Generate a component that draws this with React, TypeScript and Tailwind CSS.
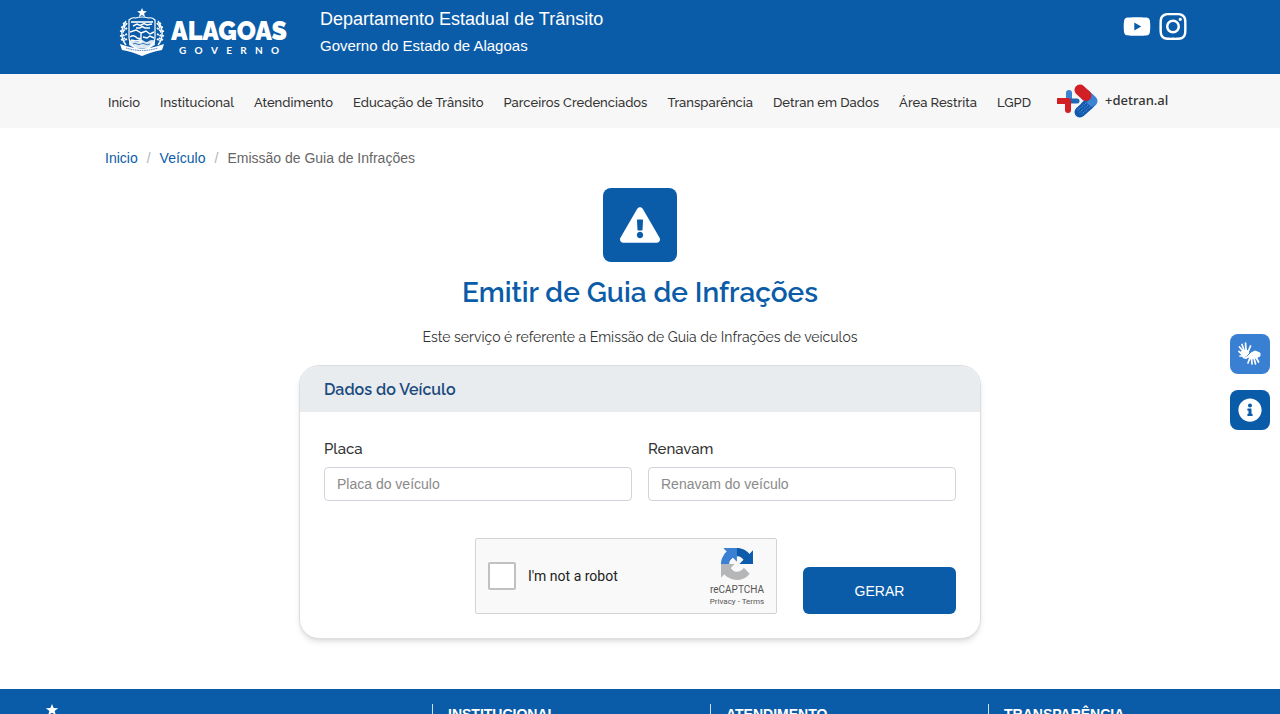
import {
  FaExclamationTriangle,
  FaInfoCircle,
  FaInstagram,
  FaYoutube,
} from "react-icons/fa";

const menu = [
  "Início",
  "Institucional",
  "Atendimento",
  "Educação de Trânsito",
  "Parceiros Credenciados",
  "Transparência",
  "Detran em Dados",
  "Área Restrita",
  "LGPD",
];

const footerColumns = [
  { title: "INSTITUCIONAL" },
  { title: "ATENDIMENTO" },
  { title: "TRANSPARÊNCIA" },
];

const Crest = ({ className }: { className: string }) => (
  <svg viewBox="0 0 46 48" className={className} fill="none" stroke="white" aria-hidden="true">
    <path d="M23 0l1.300 3.100 3.600.2-2.800 2.200 1 3.400-3.100-1.900-3.100 1.900 1-3.400-2.800-2.200 3.600-.2z" fill="white" stroke="none" />
    <path d="M10 12q3-3 6.500-2 6.500-2 13 0 3.500-1 6.500 2v18q0 8-13 13-13-5-13-13z" strokeWidth="1.200" />
    <path d="M12 14h22" strokeWidth="1.600" />
    <path d="M14 18l4-2 3 1.500 4-2 3 1.500 5-1M17 20h4l2-1.500 3 1.500h5" strokeWidth="1.500" />
    <path d="M11 24l6-2 5 3V38M22 25l5-2 4 3 4-2M11 29q4-3 7 1l4 1M24 29l4 1 3-2 4 2M12 32l5 1 4-1" strokeWidth="1.400" />
    <path d="M10 33q3-2 5 0t5 0 5 0 5 0 6 0v4l-5 3H15l-5-3z" fill="white" stroke="none" opacity=".85" />
    <path d="M14 36q2-1.500 4 0t4 0 4 0 5 0" stroke="#0b5ca8" strokeWidth=".8" />
    <path d="M7 37C1 30 2 20 7 13M39 37c6-7 5-17 0-24" strokeWidth="1.400" />
    <path d="M4 15l3 2M2 19l4 1M1 23l4 1M1 28l4-1M2 32l4-2M8 15l-3 4M8 20l-4 3M8 26l-4 2M8 31l-4 2M42 15l-3 2M44 19l-4 1M45 23l-4 1M45 28l-4-1M44 32l-4-2M38 15l3 4M38 20l4 3M38 26l4 2M38 31l4 2" strokeWidth="1.800" strokeDasharray="2 .7" />
    <path d="M1 36l6 2q16 5 32 0l6-2-2 6-5 1q-4 1-7 2l-8 3-8-3q-3-1-7-2l-5-1z" fill="white" stroke="none" />
    <path d="M7 40q16 5 32 0" stroke="#0b5ca8" strokeWidth=".8" strokeDasharray="1.500 .8" />
  </svg>
);

const DetranMark = () => (
  <svg viewBox="0 0 42 34" className="h-[34px] w-[42px]" fill="none" strokeLinecap="round" strokeLinejoin="round" aria-hidden="true">
    <path d="M12 9v7" stroke="#3d83d3" strokeWidth="6" />
    <path d="M14 17h6" stroke="#1e68bb" strokeWidth="5" />
    <path d="M3 17h8v9" stroke="#d21f26" strokeWidth="6" />
    <path d="M0 14h5v6H0z" fill="#d21f26" />
    <path d="M29 11.500l6 5.500-6 5" stroke="#3d83d3" strokeWidth="11" />
    <path d="M23 28l9-8" stroke="#1258ac" strokeWidth="11" />
    <path d="M32 14l8 4-5 5-5-4z" fill="#3d83d3" />
    <path d="M23 6l6 5.500" stroke="#d21f26" strokeWidth="11" />
    <path d="M21 26l9-8M23 28l9-8M25 30l10-9" stroke="#6ba5e0" strokeWidth="1" strokeDasharray="0 2" />
  </svg>
);

const RecaptchaMark = () => (
  <svg viewBox="0 0 64 64" className="h-8 w-8" aria-hidden="true">
    <path fill="#0d5cab" d="M64 31.955l-.033-1.37V4.687l-7.16 7.16C50.948 4.674 42.033.093 32.05.093c-10.4 0-19.622 4.96-25.458 12.64l11.736 11.86a15.55 15.55 0 0 1 4.754-5.334c2.05-1.6 4.952-2.906 8.968-2.906.485 0 .86.057 1.135.163 4.976.393 9.288 3.14 11.828 7.124l-8.307 8.307L64 31.953" />
    <path fill="#3b80d3" d="M31.862.094l-1.37.033H4.594l7.16 7.16C4.58 13.147 0 22.06 0 32.046c0 10.4 4.96 19.622 12.64 25.458L24.5 45.768a15.55 15.55 0 0 1-5.334-4.754c-1.6-2.05-2.906-4.952-2.906-8.968 0-.485.057-.86.163-1.135.393-4.976 3.14-9.288 7.124-11.828l8.307 8.307L31.86.095" />
    <path fill="#b5b6b8" d="M.001 32.045l.033 1.37v25.898l7.16-7.16c5.86 7.173 14.774 11.754 24.76 11.754 10.4 0 19.622-4.96 25.458-12.64l-11.736-11.86a15.55 15.55 0 0 1-4.754 5.334c-2.05 1.6-4.952 2.906-8.968 2.906-.485 0-.86-.057-1.135-.163-4.976-.393-9.288-3.14-11.828-7.124l8.307-8.307c-10.522.04-22.4.066-27.295-.005" />
  </svg>
);

const HandsIcon = () => (
  <svg viewBox="0 0 24 24" className="h-6 w-6" fill="none" stroke="white" strokeLinecap="round" strokeLinejoin="round" aria-hidden="true">
    <path d="M4 9l5-1 2 3-3 3-3 1-2-3z" fill="white" strokeWidth="1" />
    <path d="M5 9L1.500 5M6 8L4 2.500M8 8L7.500 1M10 10l2.500-6M4 12l-3-2.500M4 14l-2 0" strokeWidth="1.700" />
    <path d="M5 15q2 2 4 0" strokeWidth="1.200" />
    <path d="M10 14l3-3 4-2 5 2v3l-4 2-5 1z" fill="white" strokeWidth="1" />
    <path d="M18 15l2.500 5M16 16l1.500 6M13.500 16l.500 6M12 15.500l-2 5.500M11 14l-3 2" strokeWidth="1.700" />
  </svg>
);

const Header = () => {
  return (
    <header>
      <div className="h-[74px] bg-[#0b5ca8] text-white">
        <div className="mx-auto flex max-w-[1094px] pl-3">
          <a href="/" className="flex w-[203px] shrink-0 pt-2 pl-3">
            <Crest className="h-12 w-[50px]" />
            <div className="ml-1 pt-2.5 font-['Raleway','Lato',sans-serif]">
              <p className="text-[25px] leading-[26px] font-black">ALAGOAS</p>
              <p className="flex justify-between px-2 font-['Lato'] text-[10px] leading-3 font-bold">
                {"GOVERNO".split("").map((letter, i) => (
                  <span key={i}>{letter}</span>
                ))}
              </p>
            </div>
          </a>
          <div className="pt-2 pl-3">
            <p className="text-lg leading-[22px]">Departamento Estadual de Trânsito</p>
            <p className="mt-1 text-[15px] leading-6">Governo do Estado de Alagoas</p>
          </div>
          <div className="ml-auto flex h-[52px] items-center gap-2">
            <a href="#" aria-label="YouTube"><FaYoutube className="h-[27px] w-7" /></a>
            <a href="#" aria-label="Instagram"><FaInstagram className="h-[31px] w-7" /></a>
          </div>
        </div>
      </div>
      <nav className="h-[54px] bg-[#f7f7f7] font-['Raleway','Lato',sans-serif] text-[#333]">
        <div className="mx-auto flex h-full max-w-[1064px] items-center gap-5 text-[13px] font-medium">
          {menu.map((item) => (
            <a key={item} href="#" className="pt-1 whitespace-nowrap">{item}</a>
          ))}
          <a href="#" className="flex items-center gap-1.5 pl-1.5 font-['Noto_Sans'] text-[13px] font-medium">
            <DetranMark />
            +detran.al
          </a>
        </div>
      </nav>
    </header>
  );
};

const VehicleForm = () => {
  return (
    <form className="mx-auto mt-4 max-w-[682px] overflow-hidden rounded-[20px] border border-[#dcdfe2] bg-white shadow-md">
      <h2 className="bg-[#e9ecef] px-6 pt-3 pb-2.5 font-['Raleway','Lato',sans-serif] text-base leading-6 font-semibold text-[#1c4b80]">
        Dados do Veículo
      </h2>
      <div className="px-6 pt-[25px] pb-6">
        <div className="grid grid-cols-2 gap-4">
          <div className="flex flex-col gap-1.5">
            <label htmlFor="placa" className="font-['Raleway','Lato',sans-serif] text-[15px] leading-6 font-medium text-[#333]">Placa</label>
            <input id="placa" placeholder="Placa do veículo" className="h-[34px] w-full rounded border border-[#ced4da] px-3 text-sm placeholder:text-[#8a8a8a]" />
          </div>
          <div className="flex flex-col gap-1.5">
            <label htmlFor="renavam" className="font-['Raleway','Lato',sans-serif] text-[15px] leading-6 font-medium text-[#333]">Renavam</label>
            <input id="renavam" placeholder="Renavam do veículo" className="h-[34px] w-full rounded border border-[#ced4da] px-3 text-sm placeholder:text-[#8a8a8a]" />
          </div>
        </div>
        <div className="mt-[37px] flex items-end justify-end gap-[26px]">
          <div className="flex h-[76px] w-[302px] items-center rounded-xs border border-[#d3d3d3] bg-[#f9f9f9] pl-3 font-['Roboto']">
            <input id="robot" type="checkbox" className="h-7 w-7 appearance-none rounded-xs border-2 border-[#c1c1c1] bg-white" />
            <label htmlFor="robot" className="ml-3 text-sm text-[#222]">I'm not a robot</label>
            <div className="mr-1.5 ml-auto flex w-[66px] flex-col items-center pt-1 text-[#555]">
              <RecaptchaMark />
              <p className="mt-1 text-[10px] leading-3">reCAPTCHA</p>
              <p className="text-[8px] leading-3">
                <a href="#">Privacy</a> - <a href="#">Terms</a>
              </p>
            </div>
          </div>
          <button type="button" className="h-[47px] w-[153px] rounded-md bg-[#0b5ca8] text-sm font-medium text-white">
            GERAR
          </button>
        </div>
      </div>
    </form>
  );
};

const Footer = () => {
  return (
    <footer className="mt-[50px] bg-[#0b5ca8] text-white">
      <div className="grid grid-cols-[409px_1fr_1fr_1fr] pt-[15px] pr-[14px] pl-[23px]">
        <Crest className="h-[60px] w-[58px]" />
        {footerColumns.map((column) => (
          <div key={column.title} className="border-l border-white/80 pl-[15px]">
            <h3 className="pt-0.5 text-sm leading-4 font-bold">{column.title}</h3>
          </div>
        ))}
      </div>
    </footer>
  );
};

const App = () => {
  return (
    <div className="h-screen overflow-hidden bg-white font-['Liberation_Sans',sans-serif]">
      <Header />
      <main>
        <nav className="mx-auto mt-5 flex max-w-[1070px] gap-[9px] text-sm leading-5" aria-label="breadcrumb">
          <a href="#" className="text-[#0b5ca8]">Inicio</a>
          <span className="text-[#b5b5b5]">/</span>
          <a href="#" className="text-[#0b5ca8]">Veículo</a>
          <span className="text-[#b5b5b5]">/</span>
          <span className="text-[#666]">Emissão de Guia de Infrações</span>
        </nav>
        <div className="mt-5 text-center font-['Raleway','Lato',sans-serif]">
          <div className="mx-auto flex h-[74px] w-[74px] items-center justify-center rounded-lg bg-[#0b5ca8] text-white">
            <FaExclamationTriangle className="h-10 w-10" />
          </div>
          <h1 className="mt-[13px] text-[28px] leading-9 font-semibold text-[#0b5ca8]">Emitir de Guia de Infrações</h1>
          <p className="mt-3.5 text-sm leading-6 text-[#333]">Este serviço é referente a Emissão de Guia de Infrações de veículos</p>
        </div>
        <VehicleForm />
      </main>
      <Footer />
      {/* Accessibility shortcuts */}
      <div className="fixed top-[334px] right-2.5 flex flex-col gap-4 text-white">
        <button type="button" aria-label="Libras" className="flex h-10 w-10 items-center justify-center rounded-lg bg-[#3a80d2]">
          <HandsIcon />
        </button>
        <button type="button" aria-label="Informações" className="flex h-10 w-10 items-center justify-center rounded-lg bg-[#0b5ca8]">
          <FaInfoCircle className="h-6 w-6" />
        </button>
      </div>
    </div>
  );
};

export default App;
